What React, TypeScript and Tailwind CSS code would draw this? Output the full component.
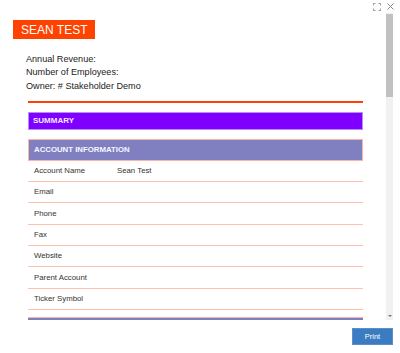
import React from 'react'

const rows: [string, string][] = [
  ['Account Name', 'Sean Test'],
  ['Email', ''],
  ['Phone', ''],
  ['Fax', ''],
  ['Website', ''],
  ['Parent Account', ''],
  ['Ticker Symbol', ''],
]

const App: React.FC = () => {
  return (
    <div className="w-[400px] h-[353px] bg-white flex flex-col font-['Liberation_Sans',Arial,sans-serif] overflow-hidden">
      {/* Top icons */}
      <div className="h-[13px] flex justify-end items-start pr-[6px] pt-[3px] gap-[6px]">
        <svg width="8" height="8" viewBox="0 0 8 8" fill="none" stroke="#9a9a9a" strokeWidth="1">
          <path d="M0.5 2.5V0.5H2.5M5.5 0.5H7.5V2.5M7.5 5.5V7.5H5.5M2.5 7.5H0.5V5.5" />
        </svg>
        <svg width="7" height="7" viewBox="0 0 7 7" fill="none" stroke="#8a8a8a" strokeWidth="1">
          <path d="M0.5 0.5L6.5 6.5M6.5 0.5L0.5 6.5" />
        </svg>
      </div>

      {/* Scroll area */}
      <div className="h-[307px] flex pr-[7px]">
        <div className="flex-1 overflow-hidden">
          <div className="ml-[13px] mt-[7px] inline-flex items-center h-[19px] px-[8px] bg-[#ff4200] text-white text-[12px] leading-none">
            SEAN TEST
          </div>
          <div className="ml-[26px] mt-[12px] text-[9.1px] leading-[13.5px] text-[#222]">
            <div>Annual Revenue:</div>
            <div>Number of Employees:</div>
            <div>Owner: # Stakeholder Demo</div>
          </div>

          <div className="ml-[28px] w-[335px]">
            <div className="mt-[7.5px] h-[2px] bg-[#ff4200]" />

            {/* Summary */}
            <div className="mt-[9px] h-[18px] bg-[#8000ff] border border-[#b98cff] flex items-center pl-[4px] text-[8px] font-bold text-[#f3eaff]">
              SUMMARY
            </div>

            {/* Account information */}
            <div className="mt-[9px] h-[22px] bg-[#8080c0] border border-[#f7b6a6] flex items-center pl-[5px] text-[7.8px] font-bold text-[#f7f7ff]">
              ACCOUNT INFORMATION
            </div>
            {rows.map(([label, value]) => (
              <div
                key={label}
                className="h-[21.4px] border-b border-[#ffc0ad] flex items-center pl-[6px] text-[7.8px] text-[#333]"
              >
                <span className="w-[83px]">{label}</span>
                <span>{value}</span>
              </div>
            ))}

            <div className="mt-[7px] h-[10px] bg-[#7f7fc0] border-t border-[#f7b6a6]" />
          </div>
        </div>

        {/* Scrollbar */}
        <div className="w-[7px] bg-[#f1f1f1] flex flex-col justify-between">
          <div className="h-[83px] mt-[1px] bg-[#c1c1c1]" />
          <div className="flex justify-center pb-[3px]">
            <div className="w-0 h-0 border-l-[2px] border-r-[2px] border-t-[2px] border-l-transparent border-r-transparent border-t-[#777]" />
          </div>
        </div>
      </div>

      {/* Footer */}
      <div className="flex justify-end pr-[7px] pt-[8px]">
        <button className="w-[41px] h-[17px] bg-[#3b7bbf] border border-[#5b8fcc] text-white text-[7.5px] leading-none flex items-center justify-center">
          Print
        </button>
      </div>
    </div>
  )
}

export default App
